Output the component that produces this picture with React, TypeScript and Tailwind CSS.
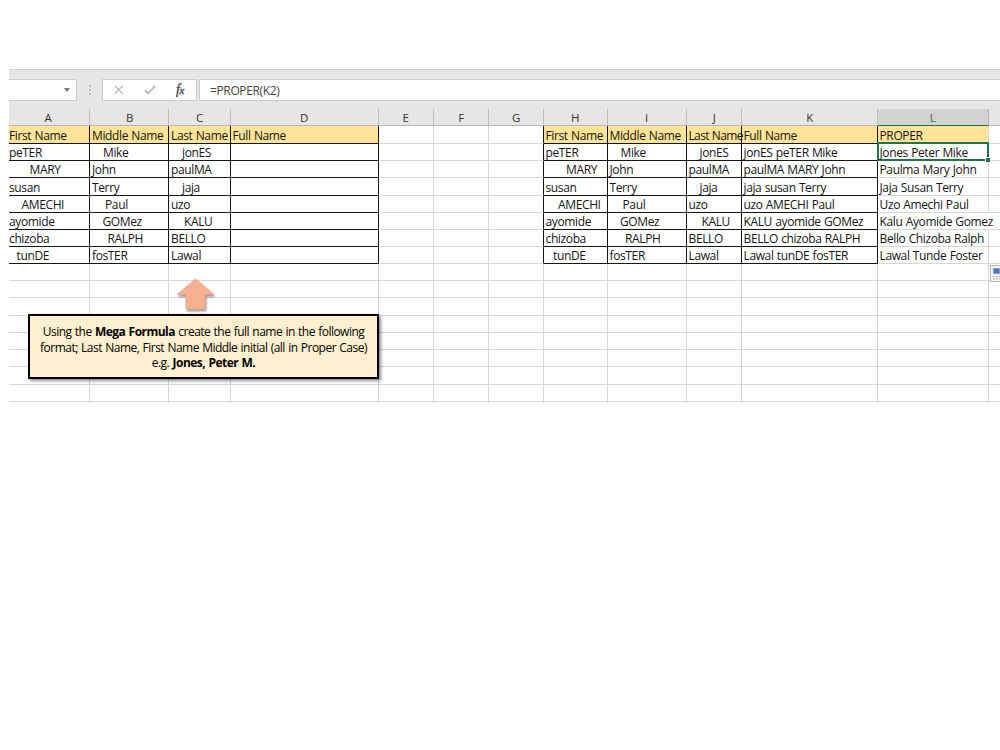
import React from 'react';

type Cell = [text: string, indent: number];

const columns = [
  { id: 'A', width: 81, label: 48 },
  { id: 'B', width: 79, label: 129.5 },
  { id: 'C', width: 62, label: 199.5 },
  { id: 'D', width: 148, label: 304 },
  { id: 'E', width: 55, label: 405.5 },
  { id: 'F', width: 55, label: 461 },
  { id: 'G', width: 55, label: 516 },
  { id: 'H', width: 64, label: 575 },
  { id: 'I', width: 79, label: 646.5 },
  { id: 'J', width: 55, label: 714 },
  { id: 'K', width: 136, label: 809.5 },
  { id: 'L', width: 111, label: 932.5 },
  { id: '', width: 20, label: 995 },
];

const starts = columns.map((_, i) => columns.slice(0, i).reduce((sum, c) => sum + c.width, 9));

const rowHeights = [18, 17, 17, 18, 17, 17, 17, 17, 17, 17, 18, 17, 17, 17, 18, 17, 2];

const names: Cell[][] = [
  [['First Name', 0], ['Middle Name', 2], ['Last Name', 2], ['Full Name', 1.5]],
  [['peTER', 0], ['Mike', 13], ['jonES', 13], ['', 0]],
  [['MARY', 20.5], ['John', 2], ['paulMA', 2], ['', 0]],
  [['susan', 0], ['Terry', 2], ['jaja', 13], ['', 0]],
  [['AMECHI', 12.5], ['Paul', 15], ['uzo', 2], ['', 0]],
  [['ayomide', 0], ['GOMez', 12.5], ['KALU', 15], ['', 0]],
  [['chizoba', 0], ['RALPH', 17.5], ['BELLO', 2], ['', 0]],
  [['tunDE', 7.5], ['fosTER', 2], ['Lawal', 2], ['', 0]],
];

const full = [
  ['Full Name', 'PROPER'],
  ['jonES peTER Mike', 'Jones Peter Mike'],
  ['paulMA MARY John', 'Paulma Mary John'],
  ['jaja susan Terry', 'Jaja Susan Terry'],
  ['uzo AMECHI Paul', 'Uzo Amechi Paul'],
  ['KALU ayomide GOMez', 'Kalu Ayomide Gomez'],
  ['BELLO chizoba RALPH', 'Bello Chizoba Ralph'],
  ['Lawal tunDE fosTER', 'Lawal Tunde Foster'],
];

function cellAt(row: number, col: number): Cell {
  if (row > 7) return ['', 0];
  if (col < 4) return names[row][col];
  if (col >= 7 && col <= 9) {
    const [text, indent] = names[row][col - 7];
    return [text, col === 7 ? indent + 1.5 : indent - 0.5];
  }
  if (col === 10) return [full[row][0], 1.5];
  if (col === 11) return [full[row][1], 1.5];
  return ['', 0];
}

function border(row: number, col: number) {
  const tableCol = col < 4 || (col >= 7 && col <= 10);
  const right = row < 8 && (tableCol || col === 6) ? 'border-r-[#151515]' : 'border-r-[#d6d6d6]';
  const bottom = row < 8 && (tableCol || (col === 11 && row === 0)) ? 'border-b-[#151515]' : 'border-b-[#d6d6d6]';
  return `${right} ${bottom}`;
}

function FormulaBar() {
  return (
    <div className="flex h-[40px] items-start border-t border-[#cfcfcf] bg-[#e6e6e6] pt-[9px]">
      <div className="flex h-[22px] w-[68px] items-center justify-end border border-l-0 border-[#cdcdcd] bg-[#fdfdfd] pr-[6px]">
        <svg width="6" height="4" viewBox="0 0 6 4"><path d="M0 0h6L3 4z" fill="#777" /></svg>
      </div>
      <div className="flex h-[22px] w-[25px] flex-col items-center justify-center gap-[2px]">
        <i className="h-[2px] w-[2px] bg-[#b8b8b8]" />
        <i className="h-[2px] w-[2px] bg-[#b8b8b8]" />
        <i className="h-[2px] w-[2px] bg-[#b8b8b8]" />
      </div>
      <div className="flex h-[22px] w-[95px] items-center border border-[#cdcdcd] bg-[#fdfdfd] pl-[11px]">
        <svg width="10" height="10" viewBox="0 0 10 10" fill="none" stroke="#bcbcbc" strokeWidth="1.4"><path d="M.8.8l8 8M8.8.8l-8 8" /></svg>
        <svg className="ml-[20px]" width="12" height="10" viewBox="0 0 12 10" fill="none" stroke="#bcbcbc" strokeWidth="1.9"><path d="M.8 5.3l3.4 3.2L11 1" /></svg>
        <span className="ml-[20px] pb-[1px] font-['Liberation_Serif',serif] text-[14px] leading-none text-[#444] italic [-webkit-text-stroke:0.3px_#444]">
          f<span className="text-[11px]">x</span>
        </span>
      </div>
      <div className="ml-[2px] flex h-[22px] flex-1 items-center border border-r-0 border-[#cdcdcd] bg-[#fdfdfd] pt-px pl-[10px] text-[#444]">
        =PROPER(K2)
      </div>
    </div>
  );
}

function ColumnHeaders() {
  return (
    <div className="flex h-[17px] bg-[#e6e6e6]">
      {columns.map((c, i) => (
        <div
          key={i}
          className={`flex shrink-0 border-r border-b font-medium ${
            c.id === 'L' ? 'border-r-[#b5b5b5] border-b-[#217346] bg-[#d2d2d2] text-[#217346]' : 'border-r-[#bdbdbd] border-b-[#b5b5b5] text-[#333]'
          }`}
          style={{ width: c.width }}
        >
          <span
            className="w-[20px] text-center text-[11.5px] leading-[17px]"
            style={{ marginLeft: c.label - 10 - starts[i] }}
          >
            {c.id}
          </span>
        </div>
      ))}
    </div>
  );
}

function Grid() {
  return (
    <div>
      {rowHeights.map((height, r) => (
        <div key={r} className="flex" style={{ height }}>
          {columns.map((c, i) => {
            const [text, indent] = cellAt(r, i);
            const fill = r === 0 && text ? 'bg-[#ffe497]' : '';
            const edge = r === 16 ? 'border-r border-r-[#d6d6d6]' : `border-r border-b ${border(r, i)}`;
            const overflowEdge = i === 11 && r === 5 ? 'border-r-transparent' : '';
            const tight = i === 9 && r === 0 ? 'tracking-[-0.65px]' : '';
            return (
              <div
                key={i}
                className={`flex shrink-0 items-center whitespace-nowrap ${edge} ${overflowEdge} ${fill} ${tight}`}
                style={{ width: c.width, paddingLeft: indent }}
              >
                <span className="relative z-10 pt-[2px] leading-[16px]">{text}</span>
              </div>
            );
          })}
        </div>
      ))}
    </div>
  );
}

export default function App() {
  return (
    <div className="h-[750px] w-[1000px] overflow-hidden bg-white pt-[69px] pl-[9px] font-['Open_Sans','Noto_Sans',sans-serif] text-[12px] tracking-[-0.37px] text-[#151515] [word-spacing:0.5px]">
      <div className="relative h-[334px] w-[991px] overflow-hidden">
        <FormulaBar />
        <ColumnHeaders />
        <Grid />
        <div className="absolute top-[73px] left-[868px] h-[19px] w-[112px] border-2 border-[#217346]">
          <span className="absolute -right-[3px] -bottom-[3px] h-[5px] w-[5px] border-t border-l border-white bg-[#217346]" />
        </div>
        <div className="absolute top-[196px] left-[981px] h-[17px] w-[16px] border border-[#b8b8b8] bg-[#f5f5f5]">
          <svg width="14" height="15" viewBox="0 0 14 15">
            <path d="M2.5 2.5h6v5h-6z" fill="#4f6fd6" stroke="#8899cc" />
            <path d="M9 5h4" stroke="#777" />
            <path d="M2 10.5h8M2 13h8" stroke="#aaa" strokeDasharray="2 1" />
          </svg>
        </div>
        <svg className="absolute top-[208px] left-[164px] drop-shadow-[1px_2px_1px_rgba(0,0,0,0.4)]" width="44" height="36" viewBox="0 0 44 36">
          <path d="M22.5 2L41 17.5H32V32H13V17.5H4z" fill="#f8b093" stroke="#eda587" strokeWidth=".8" />
        </svg>
        <div className="absolute top-[245px] left-[19px] flex h-[65px] w-[351px] flex-col items-center justify-center border-2 border-black bg-[#fff1cf] pt-[2px] text-center leading-[15.5px] tracking-[-0.52px] whitespace-nowrap text-black shadow-[2px_2px_3px_rgba(0,0,0,0.45)] [word-spacing:0.7px]">
          <p>Using the <b>Mega Formula</b> create the full name in the following</p>
          <p>format; Last Name, First Name Middle initial (all in Proper Case)</p>
          <p>e.g. <b>Jones, Peter M.</b></p>
        </div>
      </div>
    </div>
  );
}
